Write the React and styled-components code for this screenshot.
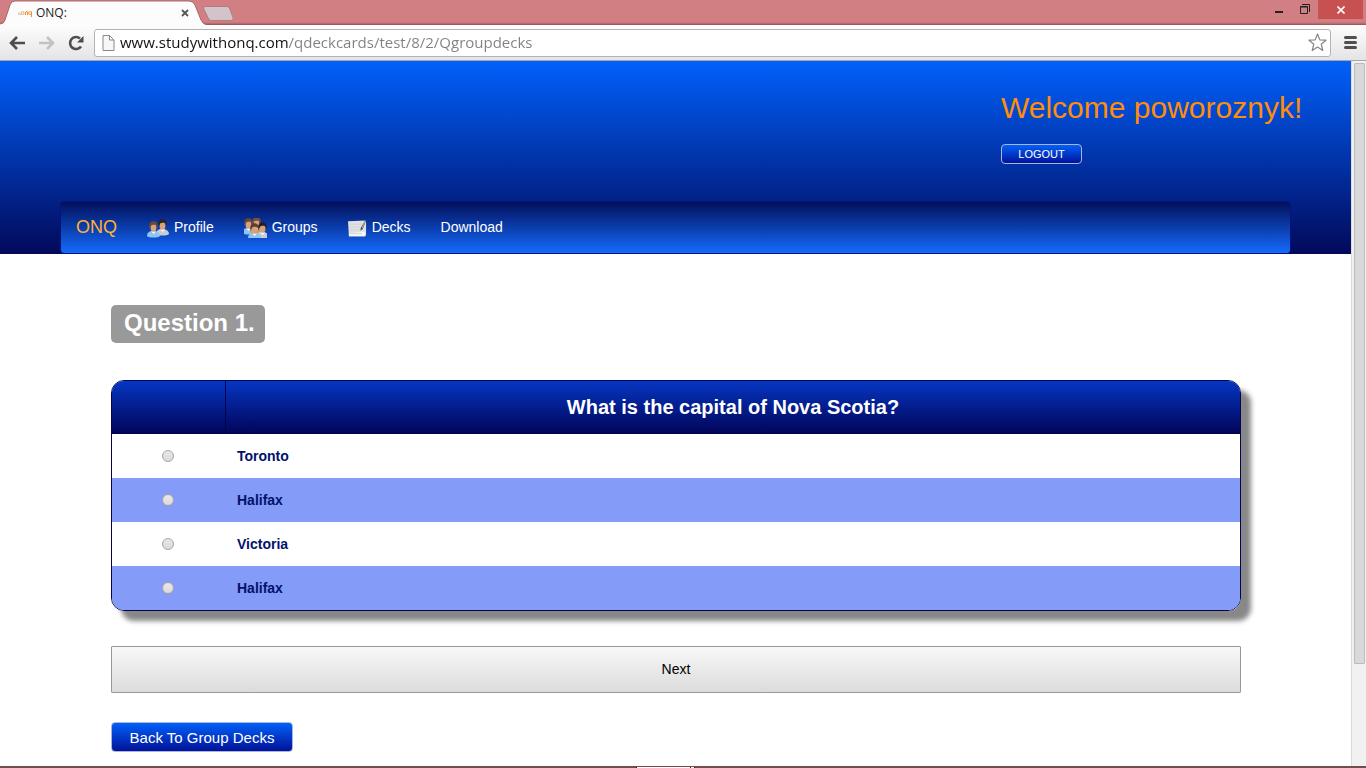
import React, { useState } from "react";
import styled, { createGlobalStyle } from "styled-components";

const GlobalStyle = createGlobalStyle`
  *, *::before, *::after { box-sizing: border-box; }
  body { margin: 0; background: #fff; font-family: "Liberation Sans", Arial, sans-serif; font-size: 14px; }
  button, input { font-family: inherit; }
`;

const Window = styled.div`
  display: flex;
  flex-direction: column;
  min-height: 100vh;
`;

/* Browser frame */
const TitleBar = styled.div`
  display: flex;
  align-items: flex-start;
  height: 25px;
  background: linear-gradient(#d17f83 0, #d17f83 22px, #b0656b 24px, #8c4a50 25px);
`;

const Tab = styled.div`
  position: relative;
  display: flex;
  align-items: center;
  width: 206px;
  height: 25px;
  padding: 0 16px 0 18px;
  color: #222;
  font: 12px/16px "Open Sans", sans-serif;
`;

const TabShape = styled.svg`
  position: absolute;
  inset: 0;
`;

const Favicon = styled.svg`
  position: relative;
  margin-right: 3px;
`;

const TabTitle = styled.span`
  position: relative;
  flex: 1;
`;

const PlainButton = styled.button`
  display: flex;
  align-items: center;
  justify-content: center;
  position: relative;
  width: ${(p) => p.$w}px;
  height: ${(p) => p.$h}px;
  padding: 0;
  border: 0;
  background: ${(p) => p.$bg || "none"};
`;

const WindowControls = styled.div`
  display: flex;
  margin: 0 3px 0 auto;
`;

const Toolbar = styled.div`
  display: flex;
  align-items: center;
  height: 36px;
  padding: 0 3px 0 4px;
  border-bottom: 1px solid #a7a7a7;
  background: linear-gradient(#fdfdfd, #e4e4e4);
`;

const AddressBar = styled.label`
  display: flex;
  flex: 1;
  align-items: center;
  height: 28px;
  margin: 0 7px 0 3px;
  padding: 0 3px 0 7px;
  border: 1px solid #b3b3b3;
  border-radius: 3px;
  background: #fff;
`;

const AddressInput = styled.input`
  flex: 1;
  height: 24px;
  margin-left: 5px;
  padding: 0 0 2px;
  border: 0;
  outline: 0;
  color: #222;
  font: 15px/22px "Open Sans", sans-serif;
  background: linear-gradient(90deg, #111 168px, #808080 168px);
  background-clip: text;
  -webkit-background-clip: text;
  -webkit-text-fill-color: transparent;
`;

const Viewport = styled.div`
  display: flex;
  flex: 1;
`;

const Page = styled.div`
  flex: 1;
  min-width: 0;
`;

const Scrollbar = styled.div`
  width: 15px;
  padding: 2px 1px 0 2px;
  border-left: 1px solid #dadada;
  background: #f1f1f1;
`;

const ScrollThumb = styled.div`
  width: 11px;
  height: calc(85% + 3px);
  border: 1px solid #bcbcbc;
  border-radius: 1px;
  background: #d9d9d9;
`;

const TaskbarEdge = styled.div`
  display: flex;
  flex: none;
  justify-content: center;
  height: 2px;
  padding-right: 35px;
  background: #774a4c;
`;

const TaskbarItem = styled.div`
  width: 59px;
  height: 1px;
  margin-top: 1px;
  background: linear-gradient(90deg, #3c2020 1px, #fff 1px, #fff 54px, #3c2020 54px, #3c2020 55px, #fff 55px, #fff 58px, #3c2020 58px);
`;

/* Site header */
const Header = styled.header`
  padding: 26px 60px 0;
  background: linear-gradient(#0160fb, #02095a);
`;

const Account = styled.div`
  display: flex;
  flex-direction: column;
  align-items: flex-start;
  width: 290px;
  height: 114px;
  margin-left: auto;
`;

const Welcome = styled.p`
  margin: 0 0 16px;
  color: #ff8c0a;
  font-size: 30px;
  line-height: 41px;
  white-space: nowrap;
`;

const BlueButton = styled.button`
  display: block;
  border: 1px solid #aab4dc;
  border-radius: 4px;
  color: #fff;
  background: linear-gradient(#0160f8, #02129a);
  padding: 0;
  width: ${(p) => (p.$small ? 81 : 182)}px;
  height: ${(p) => (p.$small ? 20 : 30)}px;
  font-size: ${(p) => (p.$small ? 11 : 15)}px;
`;

const Nav = styled.nav`
  display: flex;
  align-items: center;
  gap: 30px;
  height: 53px;
  padding: 0 15px;
  border: 1px solid #021280;
  border-radius: 4px;
  background: linear-gradient(#02105c, #146afc);
`;

const Brand = styled.a`
  color: #ffb033;
  font-size: 18px;
  text-decoration: none;
`;

const NavLink = styled.a`
  display: flex;
  align-items: center;
  gap: 5px;
  padding-bottom: 2px;
  color: #fff;
  font-size: 14px;
  line-height: 22px;
  text-decoration: none;
  svg { margin-top: 2px; }
`;

/* Quiz */
const Main = styled.main`
  padding: 51px 110px 14px 111px;
`;

const QuestionBadge = styled.h1`
  width: fit-content;
  margin: 0 0 37px;
  padding: 0 10px 2px 13px;
  border-radius: 5px;
  color: #fff;
  background: #999;
  font-size: 24px;
  line-height: 36px;
`;

const QuizTable = styled.table`
  width: 100%;
  border: 1px solid #020452;
  border-radius: 13px;
  border-spacing: 0;
  overflow: hidden;
  box-shadow: 10px 10px 5px #888;
  table-layout: fixed;
`;

const HeadCell = styled.th`
  width: ${(p) => p.$w || "auto"};
  height: 53px;
  padding: 0;
  border-bottom: 1px solid #020350;
  border-right: ${(p) => (p.$w ? "1px solid #020350" : "0")};
  color: #fff;
  background: linear-gradient(#0536c2, #02055a);
  font-size: 20px;
`;

const AnswerRow = styled.tr`
  background: #fff;
  &:nth-child(even) { background: #849bf8; }
`;

const Cell = styled.td`
  height: 44px;
  padding: ${(p) => (p.$center ? "0 2px 0 0" : "0 11px")};
  text-align: ${(p) => (p.$center ? "center" : "left")};
  color: #02126c;
  font-weight: bold;
  font-size: 14px;
`;

const Radio = styled.input`
  appearance: none;
  display: block;
  width: 12px;
  height: 12px;
  margin: 0 auto;
  border: 1px solid #a4a4a4;
  border-radius: 50%;
  background: linear-gradient(#e8e8e8, #dadada);
  &:checked { box-shadow: inset 0 0 0 2px #e2e2e2; background: #444; }
`;

const NextButton = styled.button`
  display: block;
  width: 100%;
  height: 47px;
  margin: 35px 0 29px;
  padding: 0 0 2px;
  border: 1px solid #999;
  border-radius: 1px;
  color: #000;
  background: linear-gradient(#f8f8f8, #dcdcdc);
  font-size: 14px;
`;

const answers = ["Toronto", "Halifax", "Victoria", "Halifax"];

function Person({ x, y, hair, shirt }) {
  return (
    <g transform={`translate(${x} ${y})`}>
      <path d="M0 15c0-3 2-5 6-5s7 2 7 5c-2 2-11 2-13 0z" fill={shirt} />
      <path d="M4.500 10.500 6.500 13l2.500-2.500z" fill="#fff" />
      <ellipse cx="6.500" cy="6.500" rx="2.900" ry="4.300" fill="#d9a27c" />
      <path d="M2.400 7.500C1.600 2 4 .2 6.500.2S11.500 2 10.700 7.500C9.800 6.500 10 4.500 8.500 4 7 3.600 5 3.800 4.200 4.500 3.600 5.200 3.400 7 2.400 7.500z" fill={hair} />
    </g>
  );
}

const ProfileIcon = () => (
  <svg width="22" height="20" viewBox="0 0 22 20" aria-hidden="true">
    <Person x={9} y={1} hair="#2a2523" shirt="#c9ced3" />
    <Person x={0} y={3} hair="#6b4a35" shirt="#8fc3f4" />
  </svg>
);

const GroupsIcon = () => (
  <svg width="23" height="20" viewBox="0 0 23 20" aria-hidden="true">
    <Person x={-2} y={0} hair="#6b4a35" shirt="#8fc3f4" />
    <Person x={6} y={-1} hair="#76503a" shirt="#c9a15e" />
    <Person x={12} y={4} hair="#222" shirt="#c9ced3" />
    <Person x={4} y={5} hair="#5b4030" shirt="#8fc3f4" />
  </svg>
);

const DecksIcon = () => (
  <svg width="19" height="20" viewBox="0 0 20 20" aria-hidden="true">
    <path d="M0 3 19 2v15l-1 2H1z" fill="#dfe1e2" />
    <path d="M1 15.500 18 14l-.5 4.500H1z" fill="#f8f8f8" />
    <path d="M2 6h12M2 9h11M2 12h10M2 16h13" stroke="#d0d2d4" />
    <path d="M19.500 1 15.500 11l-2.500 2 .5-3L18 2z" fill="#444b50" />
    <path d="m18 3-3 7" stroke="#aeb3b6" />
  </svg>
);

export default function App() {
  const [choice, setChoice] = useState(null);
  return (
    <>
      <GlobalStyle />
      <Window>
        <TitleBar>
          <Tab>
            <TabShape width="240" height="25" viewBox="0 0 240 25" overflow="visible" aria-hidden="true">
              <path d="M0 25V24Q4 24 5 20L10 5Q11 1 15 1H189Q193 1 195 5L201 20Q203 25 207 25z" fill="#fcfcfc" />
              <path d="M0 24Q4 24 5 20L10 5Q11 1 15 1H189Q193 1 195 5L201 20Q203 24 207 24.500" fill="none" stroke="#a9686d" />
              <path d="M205 6.500h22q2 0 3 3l3 8q1 3-2 3h-20q-2 0-3-3l-4-8q-1-3 1-3z" fill="#d3c4ca" stroke="#b07b82" />
            </TabShape>
            <Favicon width="15" height="8" viewBox="0 0 15 8" fill="none" aria-hidden="true">
              <path d="M0 5.500h3M1 3v3" stroke="#d0c9bf" />
              <circle cx="4.500" cy="4" r="1.500" stroke="#f3a456" />
              <path d="M7.500 6V3q2-1 2 0v3" stroke="#ef9134" />
              <circle cx="12" cy="4" r="1.500" stroke="#f3a456" />
              <path d="M13.500 2.500V8" stroke="#ef9134" />
            </Favicon>
            <TabTitle>ONQ:</TabTitle>
            <PlainButton $w={10} $h={14} aria-label="Close tab">
              <svg width="8" height="8" viewBox="0 0 8 8"><path d="m1 1 6 6M7 1 1 7" stroke="#555" strokeWidth="1.800" /></svg>
            </PlainButton>
          </Tab>
          <WindowControls>
            <PlainButton $w={26} $h={24} aria-label="Minimize">
              <svg width="8" height="2"><path d="M0 1h8" stroke="#222" strokeWidth="2" /></svg>
            </PlainButton>
            <PlainButton $w={26} $h={18} aria-label="Restore">
              <svg width="10" height="10" viewBox="0 0 10 10" fill="none" stroke="#222">
                <path d="M.5 2.500h7v7h-7zM0 3h8M2 .5h7.500V8" />
              </svg>
            </PlainButton>
            <PlainButton $w={45} $h={19} $bg="#c75050" aria-label="Close window">
              <svg width="8" height="8" viewBox="0 0 8 8"><path d="m.5.5 7 7m0-7-7 7" stroke="#fff" strokeWidth="1.600" /></svg>
            </PlainButton>
          </WindowControls>
        </TitleBar>
        <Toolbar>
          <PlainButton $w={27} $h={26} aria-label="Back">
            <svg width="17" height="14" viewBox="0 0 17 14" fill="none" stroke="#4d4d4d" strokeWidth="2.600"><path d="M16 7H2.500M8 1 2 7l6 6" /></svg>
          </PlainButton>
          <PlainButton $w={30} $h={26} aria-label="Forward">
            <svg width="17" height="14" viewBox="0 0 17 14" fill="none" stroke="#c2c2c2" strokeWidth="2.600"><path d="M1 7h13.500M9 1l6 6-6 6" /></svg>
          </PlainButton>
          <PlainButton $w={30} $h={26} aria-label="Reload">
            <svg width="16" height="16" viewBox="0 0 16 16"><path d="M13 11.500A6 6 0 1 1 12 3.500" fill="none" stroke="#4d4d4d" strokeWidth="2.600" /><path d="M15.500 1v6.500H9z" fill="#4d4d4d" /></svg>
          </PlainButton>
          <AddressBar>
            <svg width="13" height="16" viewBox="0 0 13 16" fill="#f7f7f7" stroke="#888" aria-hidden="true"><path d="M1 .5h6.500L12 5v10.500H1zM7.500.5V5H12" /></svg>
            <AddressInput aria-label="Address" defaultValue="www.studywithonq.com/qdeckcards/test/8/2/Qgroupdecks" />
            <svg width="19" height="19" viewBox="0 0 19 19" fill="#fff" stroke="#858585" strokeWidth="1.200" strokeLinejoin="round" aria-hidden="true"><path d="m9.500 1 2.300 5.900 6.200.3-4.800 4 1.600 6.300-5.300-3.400-5.300 3.400 1.600-6.300-4.800-4 6.200-.3z" /></svg>
          </AddressBar>
          <PlainButton $w={25} $h={26} aria-label="Menu">
            <svg width="13" height="13" viewBox="0 0 13 13"><path d="M1.500 1.500h10m-10 5h10m-10 5h10" stroke="#505050" strokeWidth="3" strokeLinecap="round" /></svg>
          </PlainButton>
        </Toolbar>
        <Viewport>
          <Page>
            <Header>
              <Account>
                <Welcome>Welcome poworoznyk!</Welcome>
                <BlueButton $small>LOGOUT</BlueButton>
              </Account>
              <Nav>
                <Brand href="#">ONQ</Brand>
                <NavLink href="#profile"><ProfileIcon />Profile</NavLink>
                <NavLink href="#groups"><GroupsIcon />Groups</NavLink>
                <NavLink href="#decks"><DecksIcon />Decks</NavLink>
                <NavLink href="#download">Download</NavLink>
              </Nav>
            </Header>
            <Main>
              <QuestionBadge>Question 1.</QuestionBadge>
              <QuizTable>
                <thead>
                  <tr>
                    <HeadCell $w="114px" aria-label="Choice" />
                    <HeadCell>What is the capital of Nova Scotia?</HeadCell>
                  </tr>
                </thead>
                <tbody>
                  {answers.map((answer, i) => (
                    <AnswerRow key={i}>
                      <Cell $center>
                        <Radio type="radio" name="answer" id={`answer-${i}`} checked={choice === i} onChange={() => setChoice(i)} />
                      </Cell>
                      <Cell><label htmlFor={`answer-${i}`}>{answer}</label></Cell>
                    </AnswerRow>
                  ))}
                </tbody>
              </QuizTable>
              <NextButton>Next</NextButton>
              <BlueButton>Back To Group Decks</BlueButton>
            </Main>
          </Page>
          <Scrollbar><ScrollThumb /></Scrollbar>
        </Viewport>
        <TaskbarEdge><TaskbarItem /></TaskbarEdge>
      </Window>
    </>
  );
}
